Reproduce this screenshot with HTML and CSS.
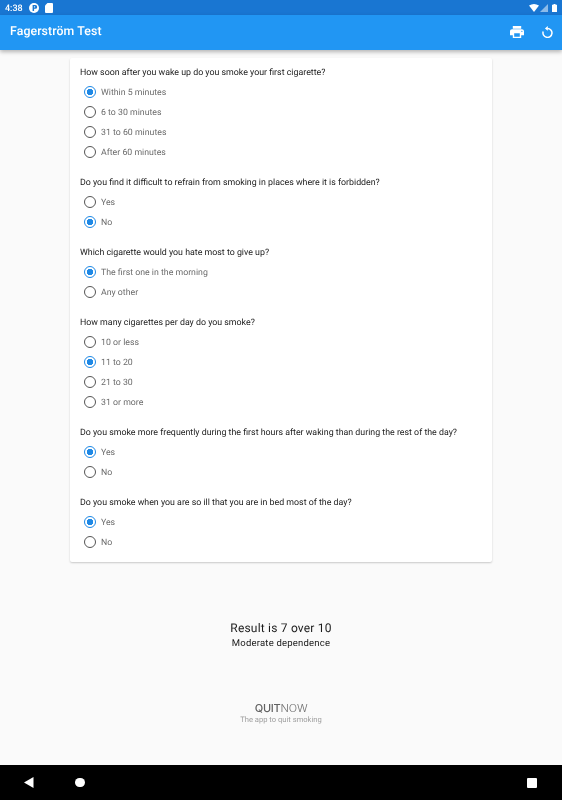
FILE: index.html
```html
<!DOCTYPE html>
<html lang="en">
<head>
<meta charset="utf-8">
<title>Fagerström Test</title>
<link rel="stylesheet" href="styles.css">
</head>
<body>
<div class="screen">
  <div class="status">
    <div class="status-left">
      <span class="time">4:38</span>
      <svg width="10" height="10" viewBox="0 0 10 10"><circle cx="5" cy="5" r="5" fill="#fff"/><path d="M3.6 2v6h1.5V5.8h1.2a1.9 1.9 0 0 0 0-3.8zM5.1 3.2v1.4h1v-1.4z" fill="#1976d2" fill-rule="evenodd"/></svg>
      <svg width="8" height="10" viewBox="0 0 8 10"><path d="M2.5 0H7a1 1 0 0 1 1 1v8a1 1 0 0 1-1 1H1a1 1 0 0 1-1-1V2.5z" fill="#fff"/></svg>
    </div>
    <div class="status-right">
      <svg width="10" height="8" viewBox="0 0 10 8"><path d="M0 1.5Q5-1.5 10 1.5L5 8z" fill="#fff"/></svg>
      <svg class="signal" width="8" height="8" viewBox="0 0 8 8"><path d="M8 0v8H0z" fill="#fff" opacity=".5"/></svg>
      <svg width="5" height="8" viewBox="0 0 5 8"><path d="M1.5 0h2v.8H5V8H0V.8h1.5z" fill="#fff"/></svg>
    </div>
  </div>
  <header class="appbar">
    <h1 class="title">Fagerström Test</h1>
    <div class="actions">
      <svg width="14" height="12" viewBox="2 3 20 18" preserveAspectRatio="none"><path d="M19 8H5c-1.66 0-3 1.34-3 3v6h4v4h12v-4h4v-6c0-1.66-1.34-3-3-3zm-3 11H8v-5h8v5zm3-7c-.55 0-1-.45-1-1s.45-1 1-1 1 .45 1 1-.45 1-1 1zm-1-9H6v4h12V3z" fill="#fff"/></svg>
      <svg width="11" height="12" viewBox="0 0 11 12"><path d="M5.5 2.4a4.5 4.5 0 1 1-4.3 3.1" fill="none" stroke="#fff" stroke-width="1.5"/><path d="M5.8 0v4.8L2.9 2.4z" fill="#fff"/></svg>
    </div>
  </header>
  <main class="content">
    <section class="card">
      <div class="group">
        <p class="question">How soon after you wake up do you smoke your first cigarette?</p>
        <div class="option"><span class="radio on"></span>Within 5 minutes</div>
        <div class="option"><span class="radio"></span>6 to 30 minutes</div>
        <div class="option"><span class="radio"></span>31 to 60 minutes</div>
        <div class="option"><span class="radio"></span>After 60 minutes</div>
      </div>
      <div class="group">
        <p class="question">Do you find it difficult to refrain from smoking in places where it is forbidden?</p>
        <div class="option"><span class="radio"></span>Yes</div>
        <div class="option"><span class="radio on"></span>No</div>
      </div>
      <div class="group">
        <p class="question">Which cigarette would you hate most to give up?</p>
        <div class="option"><span class="radio on"></span>The first one in the morning</div>
        <div class="option"><span class="radio"></span>Any other</div>
      </div>
      <div class="group">
        <p class="question">How many cigarettes per day do you smoke?</p>
        <div class="option"><span class="radio"></span>10 or less</div>
        <div class="option"><span class="radio on"></span>11 to 20</div>
        <div class="option"><span class="radio"></span>21 to 30</div>
        <div class="option"><span class="radio"></span>31 or more</div>
      </div>
      <div class="group">
        <p class="question">Do you smoke more frequently during the first hours after waking than during the rest of the day?</p>
        <div class="option"><span class="radio on"></span>Yes</div>
        <div class="option"><span class="radio"></span>No</div>
      </div>
      <div class="group">
        <p class="question">Do you smoke when you are so ill that you are in bed most of the day?</p>
        <div class="option"><span class="radio on"></span>Yes</div>
        <div class="option"><span class="radio"></span>No</div>
      </div>
    </section>
    <div class="result">
      <p class="score">Result is 7 over 10</p>
      <p class="level">Moderate dependence</p>
    </div>
    <div class="brand">
      <p class="logo"><span class="logo-bold">QUIT</span>NOW</p>
      <p class="tagline">The app to quit smoking</p>
    </div>
  </main>
  <nav class="navbar">
    <div class="nav-left">
      <svg width="10" height="11" viewBox="0 0 10 11"><path d="M9.5 0v11L0 5.5z" fill="#fff"/></svg>
      <span class="home"></span>
    </div>
    <span class="recent"></span>
  </nav>
</div>
</body>
</html>
```
FILE: styles.css
```css
* { box-sizing: border-box; margin: 0; padding: 0; }
html, body { width: 562px; height: 800px; overflow: hidden; }
body { font-family: Roboto, sans-serif; background: #fafafa; text-rendering: geometricPrecision; }
.screen { width: 562px; height: 800px; display: flex; flex-direction: column; }
.status { height: 15px; background: #1976d2; display: flex; justify-content: space-between; align-items: center; padding: 0 5px; color: #fff; flex: none; }
.status-left, .status-right { display: flex; align-items: center; }
.status-left { gap: 6px; }
.status-right { gap: 1px; }
.signal { margin-right: 3px; }
.time { font-size: 9px; font-weight: 500; width: 18px; padding-top: 2px; will-change: opacity; }
.appbar { height: 35px; background: #2196f3; display: flex; justify-content: space-between; align-items: center; padding: 0 9px 1px 10px; box-shadow: 0 2px 4px rgba(0,0,0,.28); flex: none; position: relative; }
.title { font-size: 12.3px; font-weight: 500; color: #fff; letter-spacing: .1px; will-change: opacity; }
.actions { display: flex; align-items: center; gap: 18px; }
.content { flex: 1; display: flex; flex-direction: column; align-items: center; padding-top: 8px; will-change: opacity; }
.card { width: 422px; height: 504px; background: #fff; border-radius: 2px; box-shadow: 0 1px 2px rgba(0,0,0,.2); padding: 4px 10px 10px; display: flex; flex-direction: column; gap: 10px; }
.question { height: 20px; line-height: 22px; font-size: 8.82px; color: #212121; }
.option { height: 20px; line-height: 22px; display: flex; align-items: flex-start; gap: 5px; font-size: 8.75px; color: #6b6b6b; padding-left: 4px; }
.radio { width: 12px; height: 12px; margin-top: 4px; border-radius: 50%; border: 1.3px solid #555; flex: none; }
.radio.on { border-color: #1e88e5; background: radial-gradient(circle, #1e88e5 0 2.9px, #fff 3.4px); }
.result { margin-top: 58px; text-align: center; }
.score { font-size: 12px; line-height: 16px; color: #1a1a1a; letter-spacing: .2px; }
.level { font-size: 9.5px; line-height: 16px; color: #1a1a1a; letter-spacing: .2px; }
.brand { margin-top: 50px; text-align: center; }
.logo { font-family: Inter, sans-serif; font-size: 11px; line-height: 13px; color: #6e6e6e; font-weight: 300; letter-spacing: -.2px; }
.logo-bold { font-weight: 500; color: #616161; }
.tagline { font-size: 7.6px; line-height: 10px; color: #9e9e9e; }
.navbar { height: 35px; background: #000; display: flex; justify-content: space-between; align-items: center; padding: 0 25px 0 24px; flex: none; }
.nav-left { display: flex; align-items: center; gap: 41px; }
.home { width: 9.5px; height: 9.5px; border-radius: 50%; background: #fff; }
.recent { width: 10px; height: 10px; border-radius: 1px; background: #fff; }
```
